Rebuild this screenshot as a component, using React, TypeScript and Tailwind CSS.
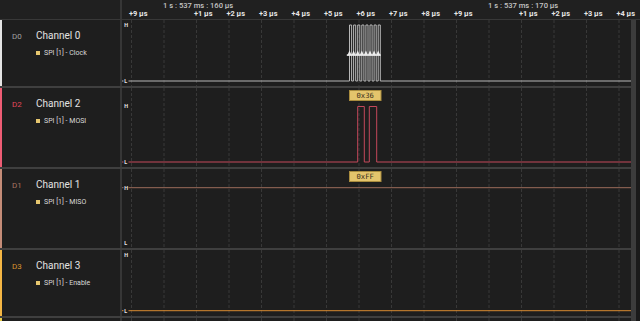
import type { ReactNode } from 'react';

const PLOT_W = 509;
const GRID = Array.from({ length: 16 }, (_, k) => 9.5 + 32.5 * k);

const ticks = [9, 0, 1, 2, 3, 4, 5, 6, 7, 8, 9, 0, 1, 2, 3, 4];

const FONT = { fontFamily: 'Roboto, "Noto Sans", sans-serif' };

function Ruler() {
    return (
        <svg width={518} height={19} className="block" style={FONT}>
            {GRID.map((x, k) =>
                ticks[k] === 0 ? (
                    <text key={k} x={x - 1} y={8} fontSize={7.6} fontWeight={500} fill="#c4c4c4">
                        {k === 1 ? '1 s : 537 ms : 160 µs' : '1 s : 537 ms : 170 µs'}
                    </text>
                ) : (
                    <text key={k} x={x - 2.5} y={15.5} fontSize={7.4} fontWeight={700} fill="#e6e6e6">
                        +{ticks[k]} µs
                    </text>
                )
            )}
        </svg>
    );
}

function Level({ y, text, onLine }: { y: number; text: string; onLine: boolean }) {
    return (
        <g>
            {onLine && <rect x={1.5} y={y - 3} width={5} height={6} fill="#1e1e1e" />}
            <text x={2.3} y={y + 1.9} fontSize={5.4} fontWeight={700} fill="#e8e8e8">
                {text}
            </text>
        </g>
    );
}

function Plot({ height, hY, lY, level, children }: { height: number; hY: number; lY: number; level: 'H' | 'L'; children?: ReactNode }) {
    return (
        <svg width={PLOT_W} height={height} className="block" style={FONT}>
            {GRID.map((x) => (
                <line key={x} x1={x} y1={0} x2={x} y2={height} stroke="#383838" strokeWidth={1} strokeDasharray="3 2" />
            ))}
            {children}
            <Level y={hY} text="H" onLine={level === 'H'} />
            <Level y={lY} text="L" onLine={level === 'L'} />
        </svg>
    );
}

type RowProps = {
    tag: string;
    tagClass: string;
    stripe: string;
    name: string;
    sub: string;
    rowClass: string;
    height: number;
    hY: number;
    lY: number;
    level: 'H' | 'L';
    children?: ReactNode;
};

function Row({ tag, tagClass, stripe, name, sub, rowClass, height, hY, lY, level, children }: RowProps) {
    return (
        <div className={`flex border-b-2 border-b-[#3f3f3f] ${rowClass}`}>
            <div className={`w-[122px] shrink-0 border-l-2 border-r-2 border-r-[#363636] pl-[10px] pt-[10px] ${stripe}`}>
                <div className="flex items-center h-[12px]">
                    <span className={`w-[24px] text-[8px] leading-[12px] mt-[2px] ${tagClass}`}>{tag}</span>
                    <span className="text-[10px] leading-[12px] text-[#e2e2e2]">{name}</span>
                </div>
                <div className="flex items-center gap-[4px] ml-[24px] mt-[6px] h-[10px]">
                    <span className="w-[4px] h-[4px] bg-[#e6c66e]" />
                    <span className="text-[7px] leading-[10px] text-[#dadada]">{sub}</span>
                </div>
            </div>
            <Plot height={height} hY={hY} lY={lY} level={level}>
                {children}
            </Plot>
        </div>
    );
}

function ValueBox({ text }: { text: string }) {
    return (
        <g>
            <rect x={227.5} y={2.5} width={31.5} height={10} fill="#e4c46c" stroke="#a98c3e" strokeWidth={1} />
            <text x={243.2} y={10.3} fontSize={7.2} textAnchor="middle" fill="#3a3020" fontFamily='"DejaVu Sans Mono", monospace'>
                {text}
            </text>
        </g>
    );
}

function clockPath(hY: number, lY: number) {
    let d = `M0 ${lY}`;
    for (let i = 0; i < 8; i++) {
        const r = 227.5 + i * 4.1;
        d += ` H${r} V${hY} H${r + 2.1} V${lY}`;
    }
    return d + ` H${PLOT_W}`;
}

const edges = Array.from({ length: 8 }, (_, i) => 227.5 + i * 4.1);

export default function App() {
    return (
        <div className="w-[640px] h-[321px] overflow-hidden bg-[#1e1e1e]" style={FONT}>
            <div className="flex h-[20px] bg-[#202020] border-b border-b-[#383838]">
                <div className="w-[122px] shrink-0 border-r-2 border-r-[#363636]" />
                <Ruler />
            </div>
            <div className="flex">
                <div className="w-[631px] shrink-0">
                    <Row tag="D0" tagClass="text-[#a0a0a0]" stripe="border-l-[#e4e4e4]" name="Channel 0" sub="SPI [1] - Clock" rowClass="h-[68px]" height={66} hY={5} lY={61} level="L">
                        <path d={clockPath(5, 61)} fill="none" stroke="#b8b8b8" strokeWidth={1} />
                        <rect x={224.8} y={34.3} width={34} height={1.6} fill="#e8e8e8" />
                        {edges.map((r) => (
                            <polygon key={r} points={`${r - 2},35 ${r},30.5 ${r + 2},35`} fill="#ececec" />
                        ))}
                    </Row>
                    <Row tag="D2" tagClass="text-[#e0485c]" stripe="border-l-[#ee5c74]" name="Channel 2" sub="SPI [1] - MOSI" rowClass="h-[81px]" height={79} hY={18.5} lY={74} level="L">
                        <path d="M0 74 H235.7 V18.5 H242.3 V74 H247.3 V18.5 H254.7 V74 H509" fill="none" stroke="#c4485a" strokeWidth={1} />
                        <ValueBox text="0x36" />
                    </Row>
                    <Row tag="D1" tagClass="text-[#a87462]" stripe="border-l-[#c48c78]" name="Channel 1" sub="SPI [1] - MISO" rowClass="h-[81px]" height={79} hY={18.7} lY={73.7} level="H">
                        <line x1={0} y1={18.7} x2={PLOT_W} y2={18.7} stroke="#9c6c5a" strokeWidth={1} />
                        <ValueBox text="0xFF" />
                    </Row>
                    <Row tag="D3" tagClass="text-[#d8922e]" stripe="border-l-[#f4b644]" name="Channel 3" sub="SPI [1] - Enable" rowClass="h-[68px]" height={66} hY={5} lY={60.7} level="L">
                        <line x1={0} y1={60.7} x2={PLOT_W} y2={60.7} stroke="#d88a30" strokeWidth={1} />
                    </Row>
                    <div className="flex h-[20px]">
                        <div className="w-[122px] shrink-0 border-l-2 border-l-[#e8cc48] border-r-2 border-r-[#363636]" />
                        <svg width={PLOT_W} height={20} className="block">
                            {GRID.map((x) => (
                                <line key={x} x1={x} y1={0} x2={x} y2={20} stroke="#383838" strokeWidth={1} strokeDasharray="3 2" />
                            ))}
                        </svg>
                    </div>
                </div>
                <div className="w-[5px] shrink-0 bg-[#3c3c3c]" />
                <div className="flex-1 bg-[#1a1a1a]" />
            </div>
        </div>
    );
}
